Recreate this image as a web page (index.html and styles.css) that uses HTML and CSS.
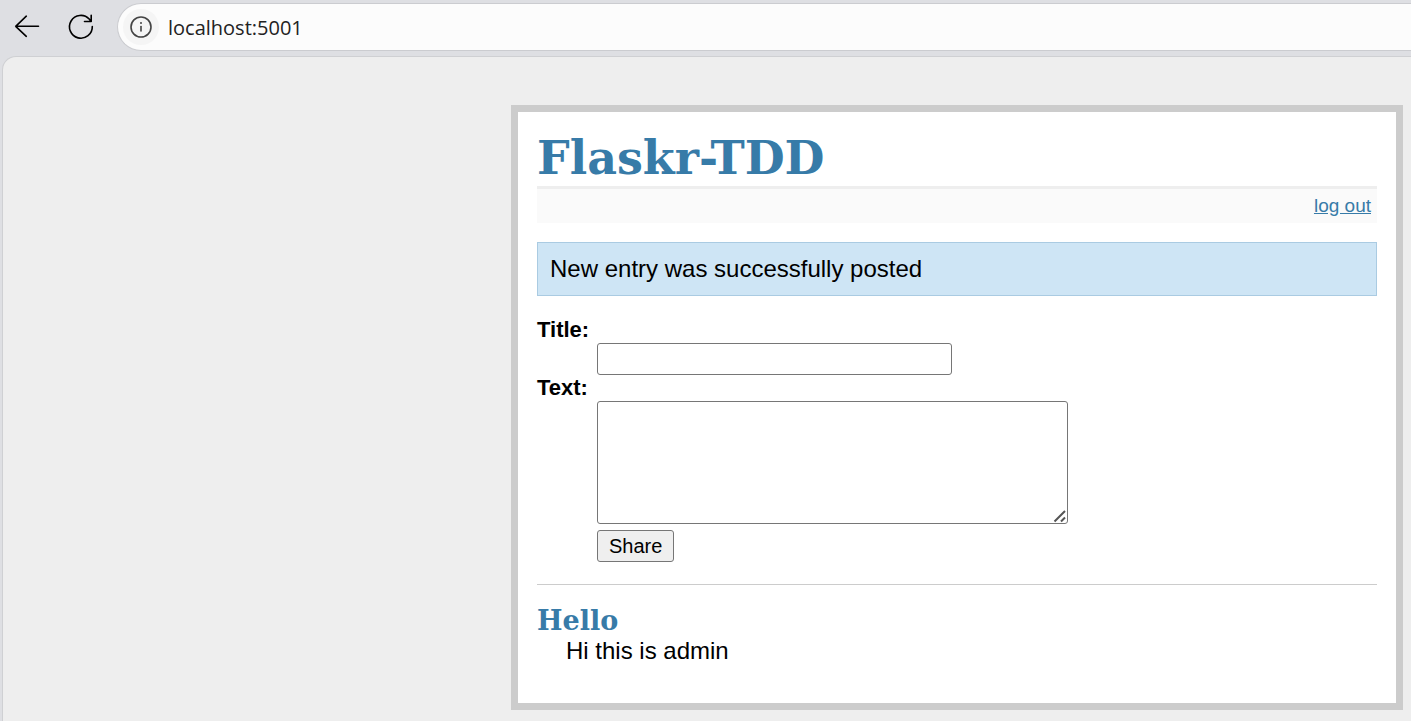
FILE: index.html
```html
<!DOCTYPE html>
<html lang="en">
<head>
<meta charset="utf-8">
<title>Flaskr-TDD</title>
<link rel="stylesheet" href="styles.css">
</head>
<body>
<header class="toolbar">
  <button class="tool" type="button" aria-label="Back">
    <svg width="28" height="28" viewBox="0 0 28 28"><path d="M25.500 13.300H2.700M13.300 3.200L2.700 13.300l10.600 10"/></svg>
  </button>
  <button class="tool" type="button" aria-label="Reload">
    <svg width="28" height="28" viewBox="0 0 28 28"><path d="M25.300 13.500A11.400 11.400 0 1 1 22.200 6L24.200 8.500M24.200 2.200V8.500H17.500"/></svg>
  </button>
  <div class="address">
    <button class="info" type="button" aria-label="Site information">
      <svg width="24" height="24" viewBox="0 0 24 24"><circle cx="12" cy="12" r="10"/><path d="M12 11.500v4.500"/><circle class="dot" cx="12" cy="8" r="1"/></svg>
    </button>
    <input class="url" type="text" value="localhost:5001" aria-label="Address">
  </div>
</header>
<div class="viewport">
  <main class="page">
    <h1 class="title">Flaskr-TDD</h1>
    <nav class="metanav"><a href="#logout">log out</a></nav>
    <div class="flash">New entry was successfully posted</div>
    <form class="add-entry">
      <label class="label" for="title">Title:</label>
      <input class="field field-title" id="title" type="text">
      <label class="label" for="text">Text:</label>
      <textarea class="field field-text" id="text"></textarea>
      <button class="share" type="button">Share</button>
    </form>
    <ul class="entries">
      <li>
        <h2 class="entry-title">Hello</h2>
        <p class="entry-text">Hi this is admin</p>
      </li>
    </ul>
  </main>
</div>
</body>
</html>
```

FILE: styles.css
```css
* {
  box-sizing: border-box;
}

body {
  display: flex;
  flex-direction: column;
  min-height: 100vh;
  margin: 0;
  background: #dedfe3;
  color: #000;
  font: 24px/28px "Liberation Sans", Arial, sans-serif;
}

.toolbar {
  display: flex;
  align-items: center;
  padding: 3px 0 5px 13px;
}

.tool,
.info {
  display: flex;
  align-items: center;
  justify-content: center;
  padding: 0;
  border: 0;
  background: none;
}

.tool {
  margin-right: 26px;
}

.toolbar svg {
  fill: none;
  stroke: #000;
  stroke-width: 1.6;
  stroke-linecap: round;
  stroke-linejoin: round;
}

.toolbar .tool + .tool {
  margin-right: 22px;
}

.address {
  display: flex;
  flex: 1;
  align-items: center;
  height: 48px;
  padding-left: 5px;
  border: 1px solid #cbccd0;
  border-right: 0;
  border-radius: 24px 0 0 24px;
  background: #fcfcfc;
}

.info {
  width: 36px;
  height: 36px;
  border-radius: 50%;
  background: #f5f5f5;
}

.toolbar .info svg {
  stroke: #444;
}

.toolbar .info .dot {
  fill: #444;
  stroke: none;
}

.url {
  flex: 1;
  min-width: 0;
  padding: 1px 0 0 9px;
  border: 0;
  background: none;
  color: #222;
  font: 20px/28px "Open Sans", "Noto Sans", sans-serif;
  outline: 0;
}

.viewport {
  flex: 1;
  margin-left: 2px;
  padding: 48px 8px 11px;
  border: 1px solid #cfd0d3;
  border-width: 1px 0 0 1px;
  border-radius: 14px 0 0 0;
  background: #eee;
}

.page {
  max-width: 892px;
  margin-left: auto;
  padding: 19px;
  border: 7px solid #ccc;
  background: #fff;
}

.title,
.entry-title {
  margin: 0;
  color: #377ba8;
  font-family: Georgia, "DejaVu Serif", serif;
  font-weight: bold;
}

.title {
  border-bottom: 3px solid #eee;
  font-size: 46px;
  line-height: 55px;
}

.metanav {
  padding: 3px 6px;
  background: #fafafa;
  font-size: 19px;
  text-align: right;
}

.metanav a {
  color: #377ba8;
}

.flash {
  margin: 19px 0 21px;
  padding: 12px;
  border: 1px solid #aacbe2;
  background: #cee5f5;
}

.add-entry {
  display: flex;
  flex-direction: column;
  align-items: flex-start;
  padding-bottom: 22px;
  border-bottom: 1px solid #ccc;
}

.label {
  font-size: 22px;
  font-weight: bold;
  line-height: 26px;
}

.field,
.share {
  margin: 0 0 0 60px;
  border: 1px solid #767676;
  border-radius: 3px;
  font: 20px/24px "Liberation Sans", Arial, sans-serif;
}

.field {
  max-width: calc(100% - 60px);
  padding: 3px;
  background: #fff;
}

.field-title {
  width: 355px;
  height: 32px;
}

.field-text {
  width: 471px;
  height: 123px;
}

.field-text::-webkit-resizer {
  background: url("data:image/svg+xml,%3Csvg xmlns='http://www.w3.org/2000/svg' width='15' height='15'%3E%3Cpath d='M2.500 13.500L13 3M9 13.500L13 9.500' stroke='%23555' stroke-width='2'/%3E%3C/svg%3E") no-repeat right bottom;
}

.share {
  height: 32px;
  margin-top: 6px;
  padding: 0 11px;
  background: #efefef;
  color: #000;
}

.entries {
  margin: 20px 0;
  padding: 0;
  list-style: none;
}

.entry-title {
  font-size: 27px;
  line-height: 32px;
}

.entry-text {
  margin: 0 0 0 29px;
  line-height: 27px;
}
```
